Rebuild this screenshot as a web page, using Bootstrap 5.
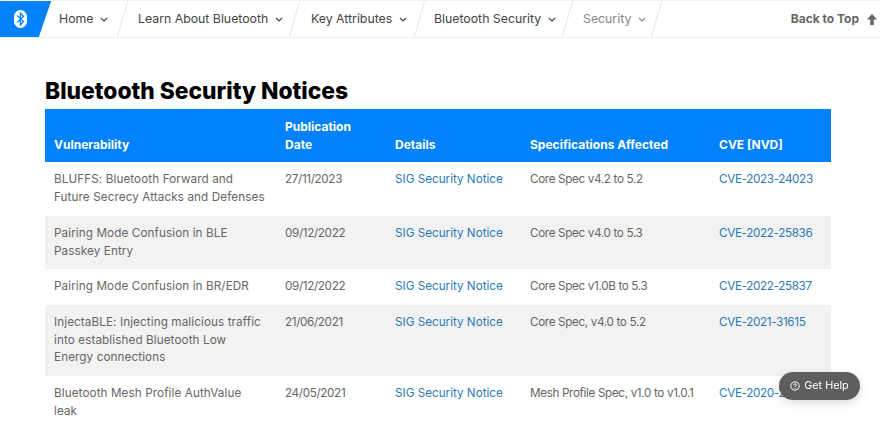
<!DOCTYPE html>
<html lang="en">
<head>
  <meta charset="UTF-8">
  <title>Bluetooth Security Notices</title>
  <link rel="stylesheet" href="https://cdn.jsdelivr.net/npm/bootstrap@5.3.0/dist/css/bootstrap.min.css">
  <style>
    body { font-family: "Inter", "DejaVu Sans", sans-serif; color: #666; overflow: hidden; }
    .bt-bar { height: 38px; border-bottom: 1px solid #eee; border-top: 1px solid #f2f2f2; background: #fff; overflow: hidden; }
    .bt-logo { width: 51px; margin-left: -6px; margin-top: -1px; height: 38px; background: #0082fc; transform: skewX(-19deg); padding-left: 20px; flex: none; }
    .bt-logo svg { transform: skewX(19deg); margin-top: 10px; display: block; }
    .bt-item { position: relative; display: flex; align-items: center; gap: 7px; font-size: 12.3px; color: #444; text-decoration: none; height: 100%; flex: none; }
    .bt-item::after { content: ""; position: absolute; top: 0; bottom: 0; right: 0; border-right: 1px solid #e6e6e6; transform: skewX(-16deg); }
    .bt-home { width: 77.5px; padding-left: 14px; }
    .bt-learn { width: 172px; padding-left: 15.5px; }
    .bt-key { width: 125px; padding-left: 16.5px; }
    .bt-sec { width: 148.5px; padding-left: 14.5px; }
    .bt-cur { width: 89px; padding-left: 15px; color: #888; }
    .bt-top { font-size: 12px; font-weight: 700; color: #666; text-decoration: none; margin-right: 3px; }
    .notice-wrap { padding: 38px 49px 0 45px; }
    .notice-title { font-size: 22.8px; font-weight: 800; color: #000; line-height: 30px; margin: 0 0 3px; }
    .notice-table { table-layout: fixed; width: 786px; margin: 0; font-size: 11.7px; line-height: 17.7px; border-collapse: collapse; }
    .notice-table th { background: #0082fc; color: #fff; font-size: 12px; font-weight: 700; vertical-align: bottom; padding: 9px; border: 0; }
    .notice-table td { color: #666; background: #fff; padding: 9px; border: 0; vertical-align: top; }
    .notice-table tbody tr:nth-child(even) td { background: #f2f2f2; }
    .notice-table a { color: #2a7bb5; text-decoration: none; }
    .notice-table td:first-child { letter-spacing: .1px; }
    .num-text { letter-spacing: -.35px; white-space: nowrap; }
    .col-vuln { width: 231px; }
    .col-date { width: 110px; }
    .col-info { width: 135px; }
    .col-spec { width: 189px; }
    .col-cve { width: 121px; }
    .help-btn { position: fixed; left: 779px; top: 372px; width: 81px; height: 28px; border-radius: 14px; background: #5e5e60; color: #fff; font-size: 10.8px; box-shadow: 0 3px 10px rgba(0,0,0,.15); }
  </style>
</head>
<body>
  <nav class="bt-bar d-flex align-items-stretch">
    <div class="bt-logo">
      <svg width="13" height="18" viewBox="0 0 13 18"><rect width="13" height="18" rx="6.5" fill="#fff"/><path d="M3.2 5.6 9.5 11.6 6.4 14.8V3.2L9.5 6.4 3.2 12.4" fill="none" stroke="#0082fc" stroke-width="1.3"/></svg>
    </div>
    <a href="#" class="bt-item bt-home">Home <svg width="8" height="5" viewBox="0 0 8 5"><path d="M1 1l3 3 3-3" fill="none" stroke="#444" stroke-width="1.2"/></svg></a>
    <a href="#" class="bt-item bt-learn">Learn About Bluetooth <svg width="8" height="5" viewBox="0 0 8 5"><path d="M1 1l3 3 3-3" fill="none" stroke="#444" stroke-width="1.2"/></svg></a>
    <a href="#" class="bt-item bt-key">Key Attributes <svg width="8" height="5" viewBox="0 0 8 5"><path d="M1 1l3 3 3-3" fill="none" stroke="#444" stroke-width="1.2"/></svg></a>
    <a href="#" class="bt-item bt-sec">Bluetooth Security <svg width="8" height="5" viewBox="0 0 8 5"><path d="M1 1l3 3 3-3" fill="none" stroke="#444" stroke-width="1.2"/></svg></a>
    <a href="#" class="bt-item bt-cur">Security <svg width="8" height="5" viewBox="0 0 8 5"><path d="M1 1l3 3 3-3" fill="none" stroke="#888" stroke-width="1.2"/></svg></a>
    <div class="ms-auto d-flex align-items-center gap-2 bt-top">
      <a href="#" class="bt-top m-0">Back to Top</a>
      <svg width="10" height="11" viewBox="0 0 10 11"><path d="M5 0 10 5.5H6.8V11H3.2V5.5H0Z" fill="#666"/></svg>
    </div>
  </nav>

  <main class="notice-wrap">
    <h2 class="notice-title">Bluetooth Security Notices</h2>
    <table class="table notice-table">
      <colgroup>
        <col class="col-vuln"><col class="col-date"><col class="col-info"><col class="col-spec"><col class="col-cve">
      </colgroup>
      <thead>
        <tr><th>Vulnerability</th><th>Publication Date</th><th>Details</th><th>Specifications Affected</th><th>CVE [NVD]</th></tr>
      </thead>
      <tbody>
        <tr><td>BLUFFS: Bluetooth Forward and Future Secrecy Attacks and Defenses</td><td class="num-text">27/11/2023</td><td><a href="#">SIG Security Notice</a></td><td class="num-text">Core Spec v4.2 to 5.2</td><td><a href="#" class="num-text">CVE-2023-24023</a></td></tr>
        <tr><td>Pairing Mode Confusion in BLE Passkey Entry</td><td class="num-text">09/12/2022</td><td><a href="#">SIG Security Notice</a></td><td class="num-text">Core Spec v4.0 to 5.3</td><td><a href="#" class="num-text">CVE-2022-25836</a></td></tr>
        <tr><td>Pairing Mode Confusion in BR/EDR</td><td class="num-text">09/12/2022</td><td><a href="#">SIG Security Notice</a></td><td class="num-text">Core Spec v1.0B to 5.3</td><td><a href="#" class="num-text">CVE-2022-25837</a></td></tr>
        <tr><td>InjectaBLE: Injecting malicious traffic<br>into established Bluetooth Low<br>Energy connections</td><td class="num-text">21/06/2021</td><td><a href="#">SIG Security Notice</a></td><td class="num-text">Core Spec, v4.0 to 5.2</td><td><a href="#" class="num-text">CVE-2021-31615</a></td></tr>
        <tr><td>Bluetooth Mesh Profile AuthValue<br>leak</td><td class="num-text">24/05/2021</td><td><a href="#">SIG Security Notice</a></td><td class="num-text">Mesh Profile Spec, v1.0 to v1.0.1</td><td><a href="#" class="num-text">CVE-2020-26559</a></td></tr>
      </tbody>
    </table>
  </main>

  <div class="help-btn d-flex align-items-center justify-content-center gap-1">
    <svg width="10" height="10" viewBox="0 0 10 10"><circle cx="5" cy="5" r="4.2" fill="none" stroke="#fff"/><path d="M3.6 4C3.7 2.4 6.4 2.5 6.4 4 6.4 5 5 5 5 6.2" fill="none" stroke="#fff" stroke-width=".9"/><circle cx="5" cy="7.5" r=".6" fill="#fff"/></svg>
    <span>Get Help</span>
  </div>
</body>
</html>
